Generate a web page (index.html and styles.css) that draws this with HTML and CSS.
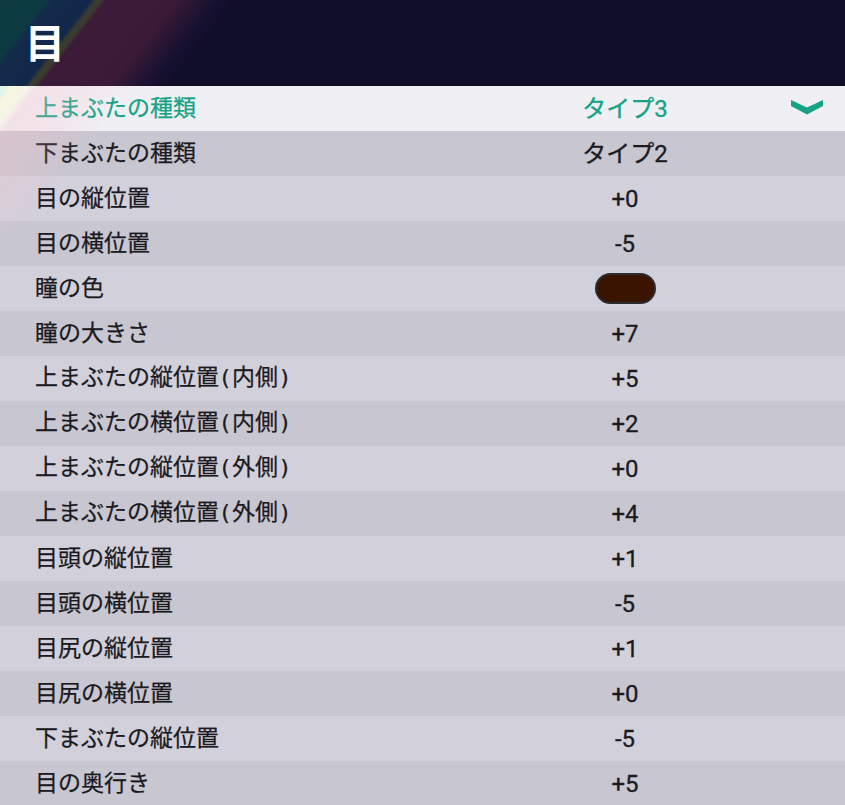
FILE: index.html
```html
<!DOCTYPE html>
<html lang="ja">
<head>
<meta charset="utf-8">
<title>目</title>
<link rel="stylesheet" href="styles.css">
</head>
<body>
<div class="screen">
  <header class="head">
    <h1 class="title">目</h1>
  </header>
  <ul class="list">
    <li class="row row-active"><span class="label">上まぶたの種類</span><span class="value">タイプ3</span><span class="chev"><svg width="32" height="15" viewBox="0 0 32 15"><polygon points="0,0 16,7.5 32,0 32,6 16,14.5 0,6" fill="#15a386"/></svg></span></li>
    <li class="row row-dark"><span class="label">下まぶたの種類</span><span class="value">タイプ2</span><span class="chev"></span></li>
    <li class="row row-light"><span class="label">目の縦位置</span><span class="value">+0</span><span class="chev"></span></li>
    <li class="row row-dark"><span class="label">目の横位置</span><span class="value">-5</span><span class="chev"></span></li>
    <li class="row row-light"><span class="label">瞳の色</span><span class="value"><span class="swatch"></span></span><span class="chev"></span></li>
    <li class="row row-dark"><span class="label">瞳の大きさ</span><span class="value">+7</span><span class="chev"></span></li>
    <li class="row row-light"><span class="label">上まぶたの縦位置<span class="paren">(</span>内側<span class="paren">)</span></span><span class="value">+5</span><span class="chev"></span></li>
    <li class="row row-dark"><span class="label">上まぶたの横位置<span class="paren">(</span>内側<span class="paren">)</span></span><span class="value">+2</span><span class="chev"></span></li>
    <li class="row row-light"><span class="label">上まぶたの縦位置<span class="paren">(</span>外側<span class="paren">)</span></span><span class="value">+0</span><span class="chev"></span></li>
    <li class="row row-dark"><span class="label">上まぶたの横位置<span class="paren">(</span>外側<span class="paren">)</span></span><span class="value">+4</span><span class="chev"></span></li>
    <li class="row row-light"><span class="label">目頭の縦位置</span><span class="value">+1</span><span class="chev"></span></li>
    <li class="row row-dark"><span class="label">目頭の横位置</span><span class="value">-5</span><span class="chev"></span></li>
    <li class="row row-light"><span class="label">目尻の縦位置</span><span class="value">+1</span><span class="chev"></span></li>
    <li class="row row-dark"><span class="label">目尻の横位置</span><span class="value">+0</span><span class="chev"></span></li>
    <li class="row row-light"><span class="label">下まぶたの縦位置</span><span class="value">-5</span><span class="chev"></span></li>
    <li class="row row-dark"><span class="label">目の奥行き</span><span class="value">+5</span><span class="chev"></span></li>
  </ul>
</div>
</body>
</html>
```

FILE: styles.css
```css
* { box-sizing: border-box; }

html, body {
  margin: 0;
  padding: 0;
}

body {
  background: #c9c7d1;
  font-family: "Noto Sans CJK JP", "Noto Sans", sans-serif;
  color: #1b1a1f;
  overflow: hidden;
}

.screen {
  width: 845px;
  display: flex;
  flex-direction: column;
}

.head {
  height: 86px;
  display: flex;
  align-items: center;
  padding-left: 25px;
  background-color: #110e2b;
  background-image:
    linear-gradient(128deg,
      #0c3a40 0px, #0d3a42 36px,
      #132a4b 42px, #12284a 72px,
      #3a3b2f 76px, #3b3a2f 80px,
      #3b1b37 84px, #3a1a36 140px,
      #2c1634 152px, #181131 170px, #110e2b 185px);
}

.title {
  margin: 0;
  font-size: 40px;
  font-weight: 700;
  color: #ffffff;
  line-height: 1;
  padding-bottom: 4px;
}

.list {
  list-style: none;
  margin: 0;
  padding: 0;
  position: relative;
}

.list::before {
  content: "";
  position: absolute;
  left: 0;
  top: 0;
  width: 140px;
  height: 150px;
  pointer-events: none;
  background: linear-gradient(128deg,
    rgba(190, 255, 210, 0.35) 0px, rgba(190, 255, 210, 0.35) 6px,
    rgba(255, 255, 200, 0.45) 10px, rgba(255, 255, 210, 0.35) 22px,
    rgba(255, 190, 200, 0.28) 30px, rgba(255, 190, 200, 0.2) 65px,
    rgba(255, 190, 200, 0) 105px);
}

.row {
  height: 45px;
  display: grid;
  grid-template-columns: 1fr 160px 140px;
  align-items: center;
  font-size: 23px;
  font-weight: 400;
  line-height: 1;
}

.row-active {
  background: #efeff4;
  color: #15a386;
}

.row-dark {
  background: #c8c6d0;
}

.row-light {
  background: #d2d0db;
}

.label {
  padding-left: 35px;
  padding-bottom: 4px;
  white-space: nowrap;
  -webkit-text-stroke: 0.25px currentColor;
}

.paren {
  display: inline-block;
  width: 13px;
  text-align: center;
  font-family: "DejaVu Sans", sans-serif;
  font-size: 22px;
}

.value {
  text-align: center;
  font-family: "Roboto", "Noto Sans CJK JP", sans-serif;
  font-size: 24px;
  font-weight: 400;
  -webkit-text-stroke: 0.3px currentColor;
  display: flex;
  justify-content: center;
  align-items: center;
}

.swatch {
  display: block;
  width: 61px;
  height: 31px;
  border-radius: 16px;
  background: #3a1400;
  border: 2px solid #2b2a2e;
}

.chev {
  display: flex;
  justify-content: flex-end;
  padding-right: 22px;
}

.chev svg {
  display: block;
  margin-top: -2px;
}
```
